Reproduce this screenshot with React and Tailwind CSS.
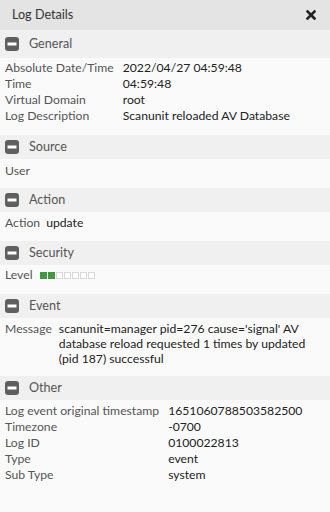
import React from "react";

function MinusIcon() {
  return (
    <svg width="14" height="14" viewBox="0 0 14 14" className="shrink-0">
      <rect x="0" y="0" width="14" height="14" rx="3" fill="#5f5f5f" />
      <rect x="2.5" y="5.5" width="9" height="3" fill="#ffffff" />
    </svg>
  );
}

function SectionHeader({ title, tall }) {
  return (
    <div className={`flex items-center gap-[10px] bg-[#f0f0f0] pl-[5px] ${tall ? "h-[28px]" : "h-[24px]"}`}>
      <MinusIcon />
      <span className="text-[12.6px] text-[#555]">{title}</span>
    </div>
  );
}

function KeyTable({ rows }) {
  return (
    <table className="border-collapse">
      <tbody>
        {rows.map(([k, v]) => (
          <tr key={k} className="leading-4">
            <td className="pr-[9px] text-[#555] whitespace-nowrap align-top">{k}</td>
            <td className="text-[#222] align-top">{v}</td>
          </tr>
        ))}
      </tbody>
    </table>
  );
}

export default function App() {
  return (
    <div className="w-[330px] h-[512px] bg-[#fafafa] overflow-hidden text-[12.2px]" style={{ fontFamily: "Lato, 'Open Sans', sans-serif" }}>
      <div className="h-[30px] bg-[#e4e4e4] flex items-center justify-between pl-3 pr-[14px]">
        <span className="text-[12.6px] text-[#333]">Log Details</span>
        <svg width="10" height="10" viewBox="0 0 10 10">
          <path d="M1.5 1.5 L8.5 8.5 M8.5 1.5 L1.5 8.5" stroke="#222" strokeWidth="2.6" strokeLinecap="square" />
        </svg>
      </div>

      <SectionHeader title="General" tall />
      <div className="pl-[5px] pt-[2px] pb-[11px]">
        <KeyTable
          rows={[
            ["Absolute Date/Time", "2022/04/27 04:59:48"],
            ["Time", "04:59:48"],
            ["Virtual Domain", "root"],
            ["Log Description", "Scanunit reloaded AV Database"],
          ]}
        />
      </div>

      <SectionHeader title="Source" />
      <div className="pl-[5px] pt-[4px] pb-[9px] leading-4 text-[#555]">User</div>

      <SectionHeader title="Action" />
      <div className="pl-[5px] pt-[3px] pb-[10px] leading-4 flex gap-[6px]">
        <span className="text-[#555]">Action</span>
        <span className="text-[#222]">update</span>
      </div>

      <SectionHeader title="Security" />
      <div className="pl-[5px] pt-[2px] pb-[11px] leading-4 flex items-center gap-[7px]">
        <span className="text-[#555]">Level</span>
        <div className="flex gap-[1px]">
          <span className="w-[7px] h-[7px] bg-[#3f9a3f]" />
          <span className="w-[7px] h-[7px] bg-[#3f9a3f]" />
          {[0, 1, 2, 3, 4].map((i) => (
            <span key={i} className="w-[7px] h-[7px] border border-[#d8d8d8] bg-white" />
          ))}
        </div>
      </div>

      <SectionHeader title="Event" />
      <div className="pl-[5px] pr-3 pt-[3px] pb-[10px] leading-[15px] flex gap-[7px]">
        <span className="text-[#555]">Message</span>
        <span className="text-[#222]">
          scanunit=manager pid=276 cause='signal' AV database reload requested 1 times by updated (pid 187) successful
        </span>
      </div>

      <SectionHeader title="Other" />
      <div className="pl-[5px] pt-[3px] pb-[10px]">
        <KeyTable
          rows={[
            ["Log event original timestamp", "1651060788503582500"],
            ["Timezone", "-0700"],
            ["Log ID", "0100022813"],
            ["Type", "event"],
            ["Sub Type", "system"],
          ]}
        />
      </div>
    </div>
  );
}
